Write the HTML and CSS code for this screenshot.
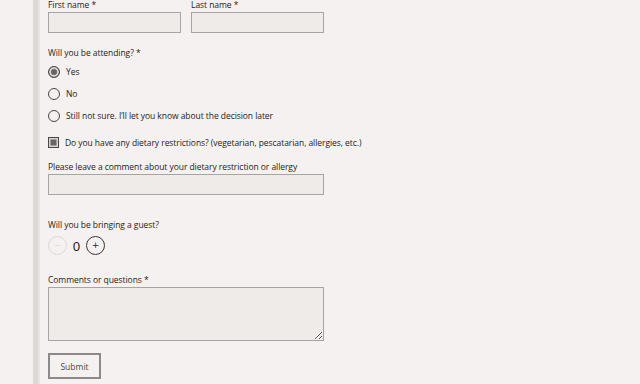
FILE: index.html
```html
<!DOCTYPE html>
<html lang="en">

<head>
    <meta charset="UTF-8">
    <meta name="viewport" content="width=device-width, initial-scale=1.0">
    <title>RSVP</title>
    <link rel="stylesheet" href="styles.css">
</head>

<body>
    <div class="page">
        <div class="rail"></div>
        <form class="rsvp">
            <div class="row names">
                <div class="field">
                    <label for="first">First name *</label>
                    <input type="text" id="first" class="text-input">
                </div>
                <div class="field">
                    <label for="last">Last name *</label>
                    <input type="text" id="last" class="text-input">
                </div>
            </div>

            <div class="group attending">
                <p class="question">Will you be attending? *</p>
                <label class="choice"><input type="radio" name="attend" checked> Yes</label>
                <label class="choice"><input type="radio" name="attend"> No</label>
                <label class="choice"><input type="radio" name="attend"> Still not sure. I’ll let you know about the decision later</label>
            </div>

            <label class="choice check"><input type="checkbox" checked> Do you have any dietary restrictions? (vegetarian, pescatarian, allergies, etc.)</label>

            <div class="field diet">
                <label for="diet">Please leave a comment about your dietary restriction or allergy</label>
                <input type="text" id="diet" class="text-input wide">
            </div>

            <div class="field guests">
                <p class="question">Will you be bringing a guest?</p>
                <div class="stepper">
                    <button type="button" class="step minus" disabled>−</button>
                    <span class="count">0</span>
                    <button type="button" class="step plus">+</button>
                </div>
            </div>

            <div class="field comments">
                <label for="comments">Comments or questions *</label>
                <textarea id="comments" class="text-input wide"></textarea>
            </div>

            <button type="submit" class="submit">Submit</button>
        </form>
    </div>
</body>

</html>
```

FILE: styles.css
```css
body {
    margin: 0;
    background-color: #f5f1f0;
    font-family: "Open Sans", "Noto Sans", sans-serif;
    font-size: 8.5px;
    color: #1f1c1a;
}

.page {
    display: flex;
    min-height: 384px;
    padding-left: 33px;
}

.rail {
    width: 7px;
    background: linear-gradient(to right, #dcd8d5 0, #dcd8d5 5px, #e8e4e2 5px);
}

.rsvp {
    padding-left: 8px;
    display: flex;
    flex-direction: column;
    align-items: flex-start;
}

.rsvp label,
.question {
    letter-spacing: -0.06px;
}

.field {
    display: flex;
    flex-direction: column;
}

.field > label,
.question {
    margin: 0;
    line-height: 11px;
    height: 12px;
}

.names {
    display: flex;
    gap: 10px;
    margin-top: -1px;
}

.names .field > label {
    height: 13px;
}

.text-input {
    box-sizing: border-box;
    width: 133px;
    height: 21px;
    margin: 0;
    background-color: #efebe9;
    border: 1px solid #a8a4a2;
    border-radius: 0;
    font: inherit;
}

.text-input.wide {
    width: 276px;
}

.attending {
    margin-top: 14px;
}

.attending .question {
    margin-bottom: 7px;
}

.choice {
    display: flex;
    align-items: center;
    gap: 6px;
    height: 11px;
    margin-bottom: 11px;
}

.choice input {
    appearance: none;
    margin: 0;
    width: 12px;
    height: 12px;
    border: 1px solid #4a4644;
    border-radius: 50%;
    background: #f5f1f0;
    box-sizing: border-box;
}

.choice input[type="radio"]:checked {
    background: #6a6462;
    box-shadow: inset 0 0 0 2px #d8d3d1;
}

.check {
    margin-top: 5px;
    margin-bottom: 0;
}

.check input {
    border-radius: 0;
    width: 11px;
    height: 11px;
}

.check input:checked {
    background: #6a6462;
    box-shadow: inset 0 0 0 1.5px #d8d3d1;
}

.diet {
    margin-top: 13px;
}

.diet > label {
    height: 13px;
}

.guests {
    margin-top: 24px;
}

.stepper {
    display: flex;
    align-items: center;
    gap: 5px;
    margin-top: 5px;
}

.step {
    width: 19px;
    height: 19px;
    padding: 0;
    border-radius: 50%;
    border: 1px solid #3a3634;
    background: transparent;
    font-family: "DejaVu Sans", sans-serif;
    font-size: 9px;
    line-height: 1;
    color: #2b2826;
}

.step.minus {
    border-color: #dcd8d6;
    color: #dcd8d6;
}

.count {
    font-size: 13px;
    font-family: "Noto Sans", sans-serif;
    width: 9px;
    text-align: center;
}

.comments {
    margin-top: 19px;
}

.comments > label {
    height: 13px;
}

.comments textarea {
    height: 54px;
    resize: vertical;
}

.submit {
    margin-top: 12px;
    width: 53px;
    height: 26px;
    background: transparent;
    border: 2px solid #8e8987;
    font-family: "Open Sans", sans-serif;
    font-size: 8.5px;
    color: #4a4644;
}
```
